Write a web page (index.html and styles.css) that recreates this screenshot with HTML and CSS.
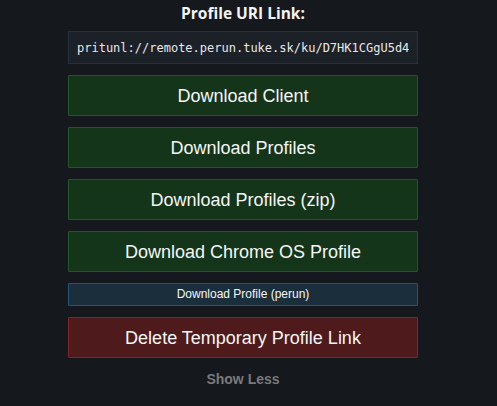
FILE: index.html
```html
<!DOCTYPE html>
<html lang="en">
<head>
  <meta charset="UTF-8" />
  <meta name="viewport" content="width=device-width, initial-scale=1.0" />
  <title>Profile</title>
  <link rel="stylesheet" href="styles.css">
</head>
<body>

  <div class="profile">
    <h3 class="profile-title">Profile URI Link:</h3>

    <input class="profile-uri" type="text" readonly value="pritunl://remote.perun.tuke.sk/ku/D7HK1CGgU5d4" />

    <button class="btn btn-green">Download Client</button>
    <button class="btn btn-green">Download Profiles</button>
    <button class="btn btn-green">Download Profiles (zip)</button>
    <button class="btn btn-green">Download Chrome OS Profile</button>
    <button class="btn btn-small btn-blue">Download Profile (perun)</button>
    <button class="btn btn-red">Delete Temporary Profile Link</button>

    <a class="toggle" href="#">Show Less</a>
  </div>

</body>
</html>
```

FILE: styles.css
```css
body {
  margin: 0;
  background: #15181c;
  color: #f1f1f1;
  font-family: 'Liberation Sans', Arial, sans-serif;
}
.profile {
  width: 350px;
  margin-left: 68px;
  display: flex;
  flex-direction: column;
  gap: 11px;
}
.profile-title {
  margin: 0;
  height: 16px;
  padding-top: 4px;
  line-height: 18px;
  text-align: center;
  font-family: 'Open Sans', sans-serif;
  font-size: 15.5px;
  font-weight: 700;
  color: #f4f4f4;
}
.profile-uri {
  box-sizing: border-box;
  width: 100%;
  height: 33px;
  padding: 0 8px;
  border: 1px solid #1f3440;
  background: #1c2027;
  color: #e8e8e8;
  font-family: 'DejaVu Sans Mono', monospace;
  font-size: 12px;
  outline: none;
}
.btn {
  box-sizing: border-box;
  width: 100%;
  height: 41px;
  padding-top: 2px;
  border: 1px solid;
  border-radius: 1px;
  color: #f6f6f6;
  font-family: 'Liberation Sans', Arial, sans-serif;
  font-size: 18px;
  cursor: pointer;
}
.btn-green {
  background: #14351a;
  border-color: #1d5a25;
}
.btn-small {
  height: 23px;
  padding-top: 0;
  font-size: 12px;
}
.btn-blue {
  background: #1b2e3b;
  border-color: #1f5878;
}
.btn-red {
  background: #4e1a1b;
  border-color: #8a2326;
}
.toggle {
  margin-top: 2px;
  text-align: center;
  font-size: 14px;
  font-weight: 700;
  color: #7a7a7a;
  text-decoration: none;
}
```
